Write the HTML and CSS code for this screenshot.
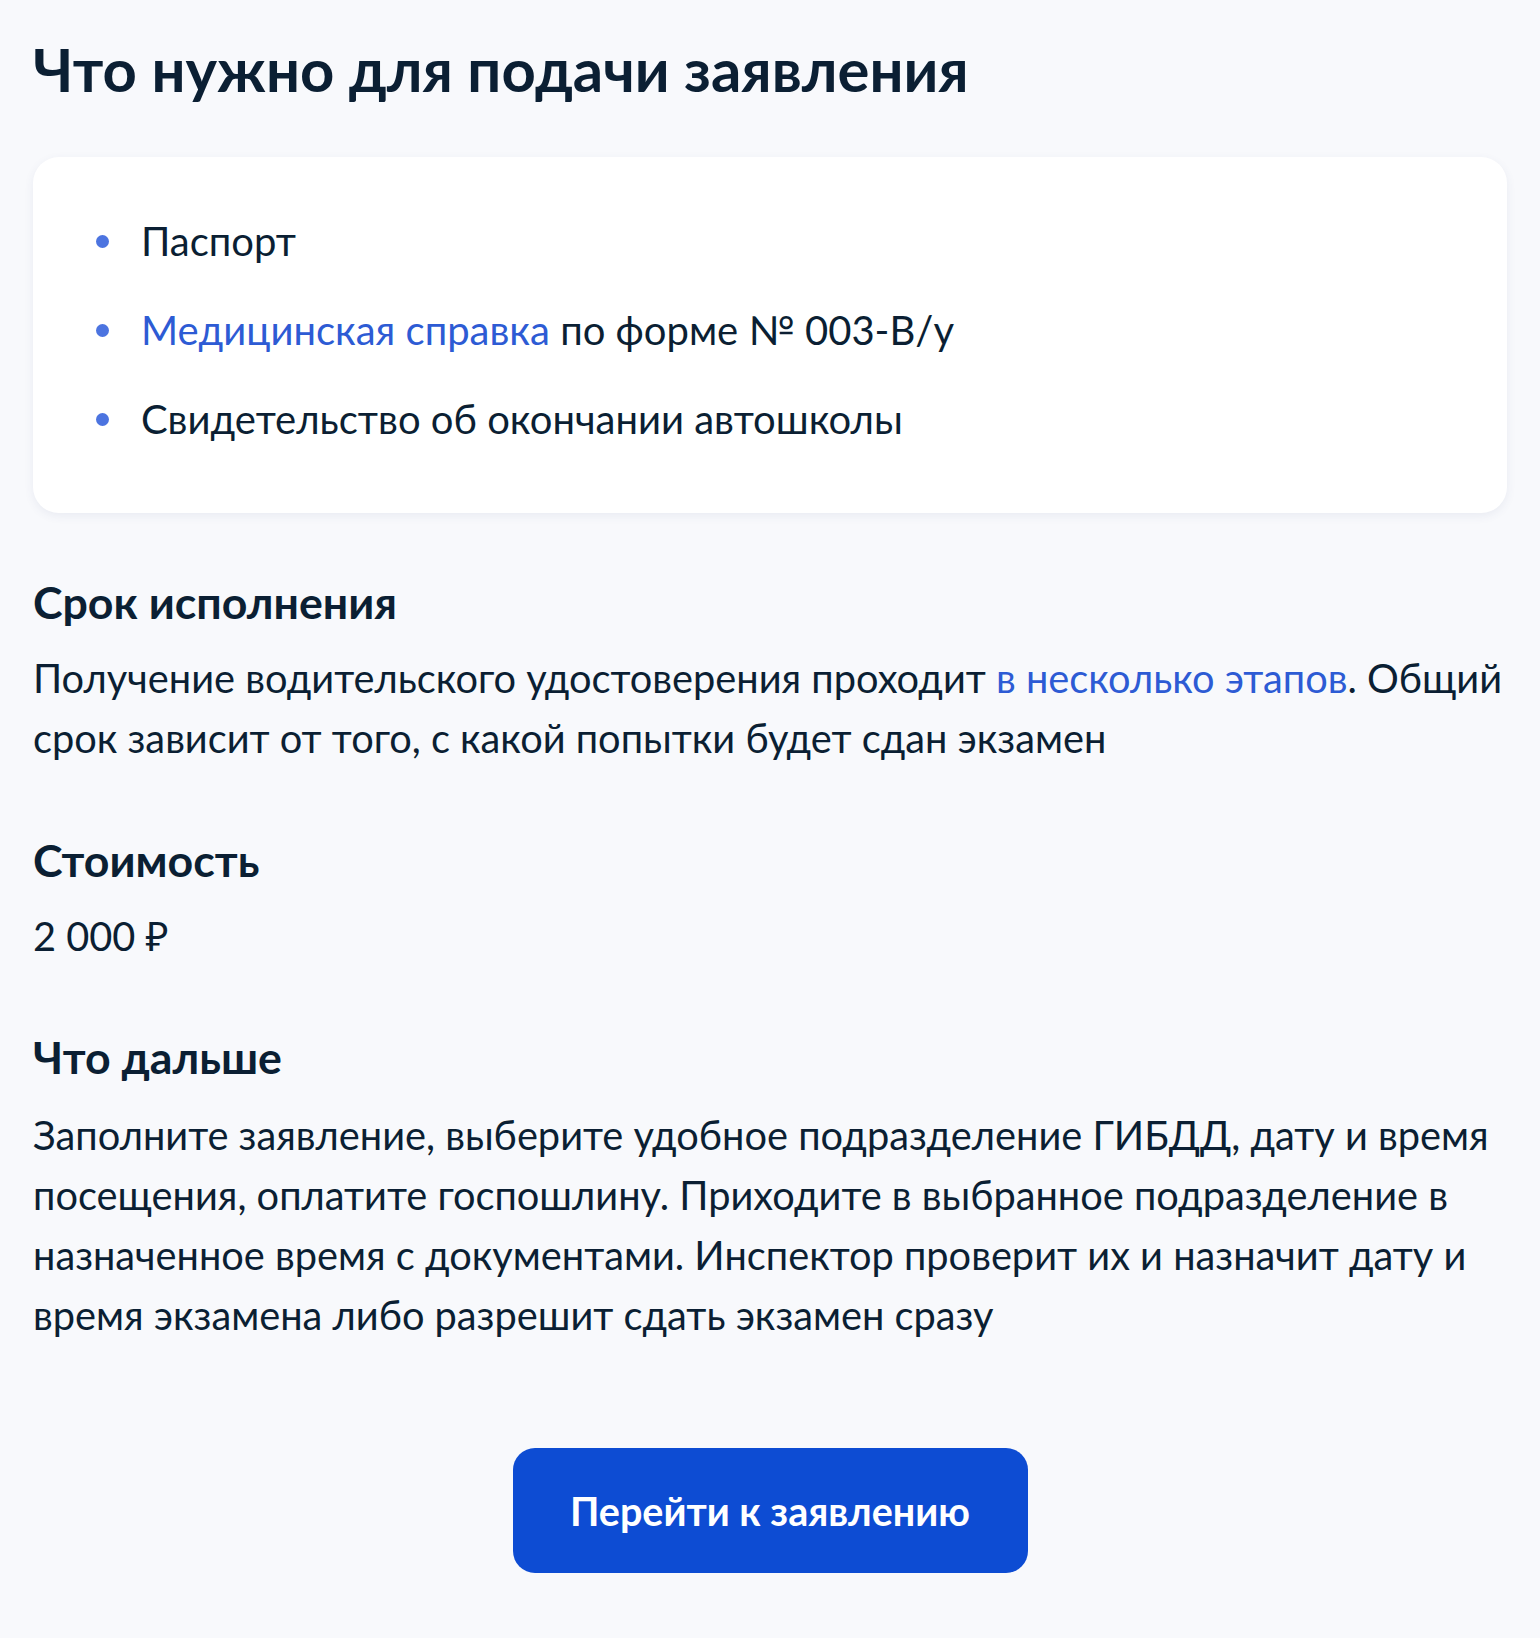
FILE: index.html
```html
<!DOCTYPE html>
<html lang="ru">
<head>
<meta charset="utf-8">
<title>Что нужно для подачи заявления</title>
<link rel="stylesheet" href="styles.css">
</head>
<body>
<main class="page">
  <h1 class="title">Что нужно для подачи заявления</h1>
  <section class="card">
    <ul class="docs">
      <li class="docs-item">Паспорт</li>
      <li class="docs-item"><a class="link" href="#">Медицинская справка</a> по форме № 003-В/у</li>
      <li class="docs-item">Свидетельство об окончании автошколы</li>
    </ul>
  </section>
  <section class="block block-first">
    <h2 class="subtitle">Срок исполнения</h2>
    <p class="text">Получение водительского удостоверения проходит <a class="link" href="#">в несколько этапов</a>. Общий срок зависит от того, с какой попытки будет сдан экзамен</p>
  </section>
  <section class="block">
    <h2 class="subtitle">Стоимость</h2>
    <p class="text price">2&nbsp;000&nbsp;₽</p>
  </section>
  <section class="block block-last">
    <h2 class="subtitle">Что дальше</h2>
    <p class="text">Заполните заявление, выберите удобное подразделение ГИБДД, дату и время посещения, оплатите госпошлину. Приходите в выбранное подразделение в назначенное время с документами. Инспектор проверит их и назначит дату и время экзамена либо разрешит сдать экзамен сразу</p>
  </section>
  <div class="actions">
    <a class="button" href="#">Перейти к заявлению</a>
  </div>
</main>
</body>
</html>
```

FILE: styles.css
```css
html, body {
  margin: 0;
  padding: 0;
  background: #f8f9fc;
}

body {
  font-family: Lato, "Noto Sans", "Liberation Sans", sans-serif;
  color: #0b1f33;
}

.page {
  padding: 38px 33px 60px;
}

.title {
  margin: 0;
  font-size: 59.8px;
  line-height: 62px;
  font-weight: 700;
  color: #0b1f33;
}

.card {
  margin-top: 57px;
  background: #ffffff;
  border-radius: 26px;
  box-shadow: 0 3px 10px rgba(60, 80, 130, 0.08);
  padding: 54px 62px 64px;
}

.docs {
  list-style: none;
  margin: 0;
  padding: 0;
  display: flex;
  flex-direction: column;
  gap: 29px;
}

.docs-item {
  position: relative;
  padding-left: 46px;
  font-size: 40px;
  line-height: 60px;
  color: #0b1f33;
}

.docs-item::before {
  content: "";
  position: absolute;
  left: 1px;
  top: 24px;
  width: 13px;
  height: 13px;
  border-radius: 50%;
  background: #4c74e0;
}

.link {
  color: #2d5bd4;
  text-decoration: none;
}

.block {
  margin-top: 64px;
}

.block-first {
  margin-top: 61px;
}

.block-last {
  margin-top: 63px;
}

.subtitle {
  margin: 0;
  font-size: 44.7px;
  line-height: 56px;
  font-weight: 700;
  color: #0b1f33;
}

.text {
  margin: 18px 0 0;
  font-size: 39.75px;
  line-height: 60px;
  color: #0b1f33;
}

.price {
  margin-top: 18px;
}

.block-last .text {
  margin-top: 20px;
}

.actions {
  display: flex;
  justify-content: center;
  margin-top: 103px;
}

.button {
  display: flex;
  align-items: center;
  justify-content: center;
  width: 515px;
  height: 125px;
  box-sizing: border-box;
  border-radius: 22px;
  background: #0d4cd3;
  color: #ffffff;
  font-size: 39.5px;
  font-weight: 700;
  text-decoration: none;
}
```
